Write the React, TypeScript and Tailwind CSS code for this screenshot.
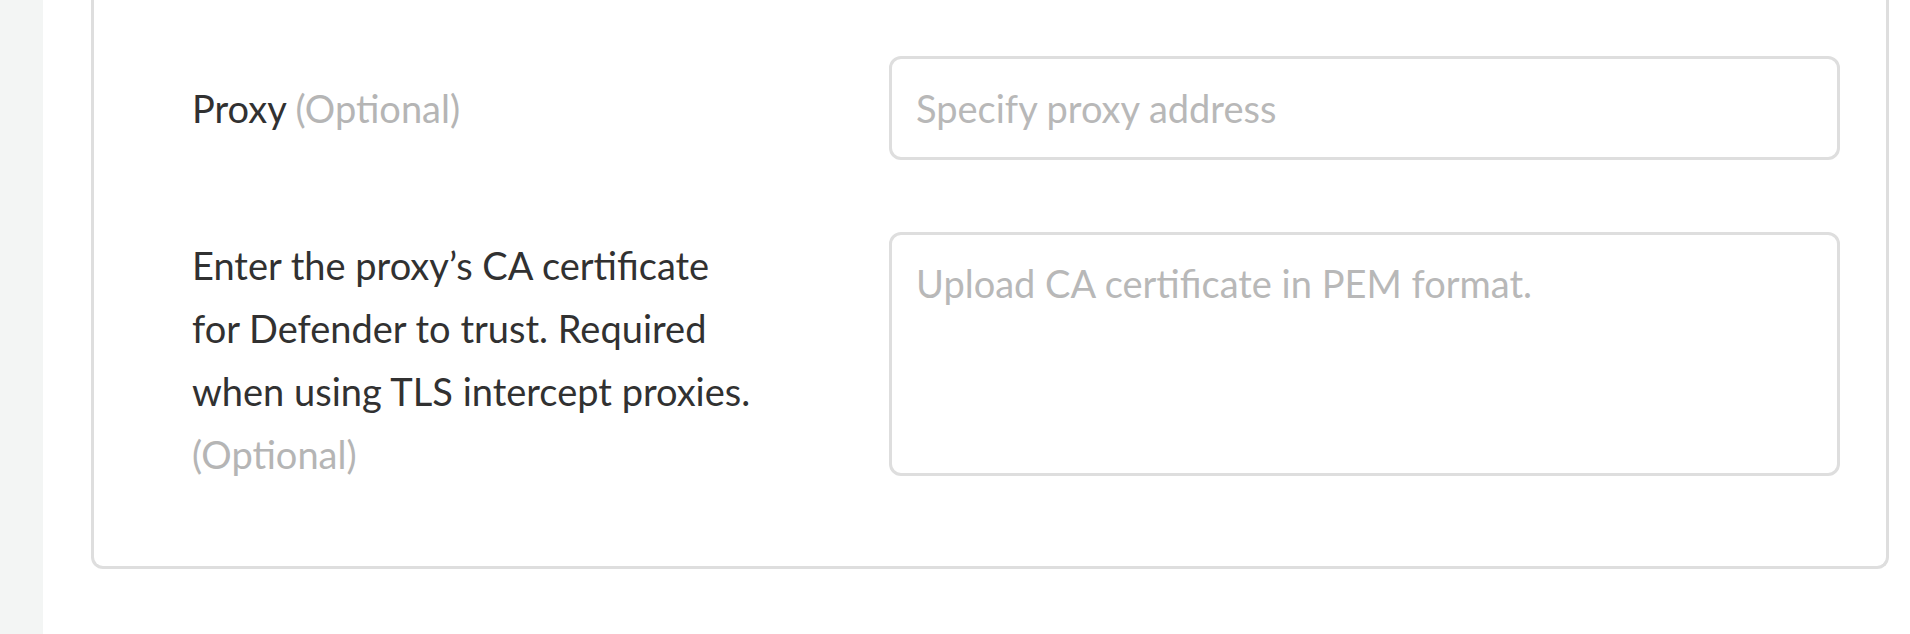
export default function App() {
  return (
    <div className="flex h-[634px] overflow-hidden bg-white font-['Lato',sans-serif] text-[38px]">
      <aside className="w-[43px] shrink-0 bg-[#f3f5f4]" />
      <main className="flex-1 pl-[48px] pr-[21px]">
        <div className="-mt-[20px] rounded-b-[12px] border-[3px] border-t-0 border-[#dedede] pt-[76px] pb-[80px] pl-[98px] pr-[46px]">
          <div className="flex items-center">
            <label className="w-[564px] shrink-0 leading-[63px] text-[#313131]">
              Proxy <span className="text-[#b5b5b5]">(Optional)</span>
            </label>
            <input
              className="ml-[133px] h-[104px] flex-1 rounded-[12px] border-[3px] border-[#dedede] px-[24px] text-[#333333] outline-none placeholder:text-[#b8b8b8]"
              placeholder="Specify proxy address"
            />
          </div>
          <div className="mt-[72px] flex items-start">
            <label className="w-[564px] shrink-0 pt-[2px] leading-[63px] text-[#313131]">
              Enter the proxy’s CA certificate for Defender to trust. Required when using TLS intercept proxies.{" "}
              <span className="text-[#b5b5b5]">(Optional)</span>
            </label>
            <textarea
              className="ml-[133px] h-[244px] flex-1 resize-none rounded-[12px] border-[3px] border-[#dedede] px-[24px] pt-[26px] leading-[1.2] text-[#333333] outline-none placeholder:text-[#b8b8b8]"
              placeholder="Upload CA certificate in PEM format."
            />
          </div>
        </div>
      </main>
    </div>
  )
}
